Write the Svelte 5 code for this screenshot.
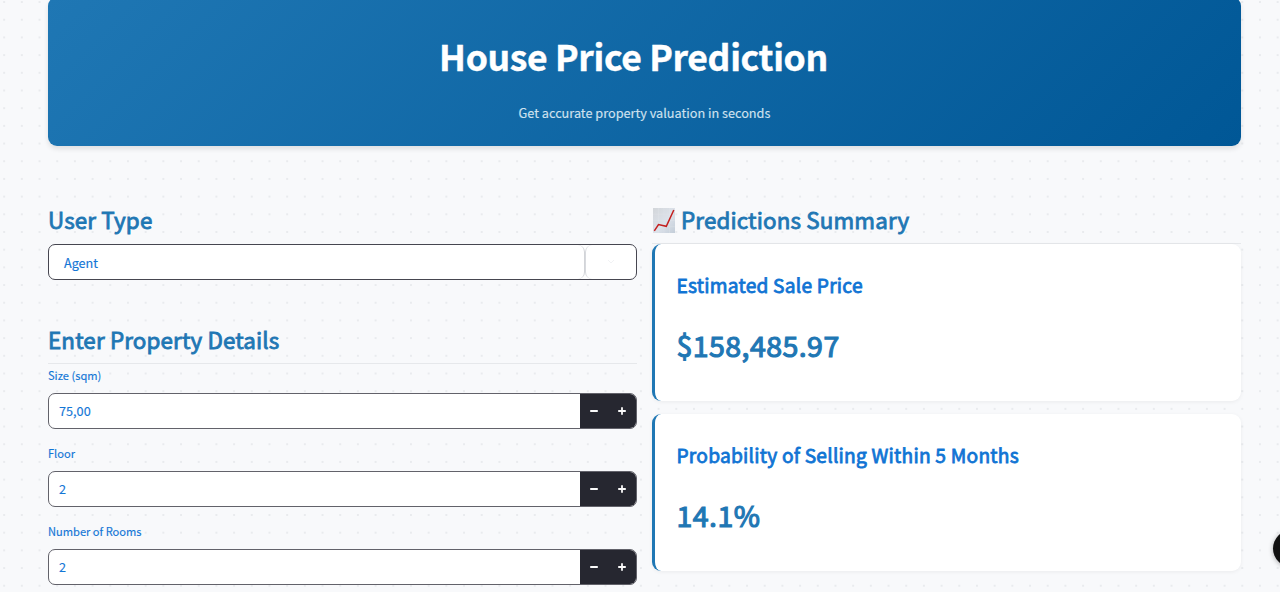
<script>
  const fields = [
    { label: 'Size (sqm)', value: '75,00' },
    { label: 'Floor', value: '2' },
    { label: 'Number of Rooms', value: '2' }
  ];
  const cards = [
    { title: 'Estimated Sale Price', value: '$158,485.97' },
    { title: 'Probability of Selling Within 5 Months', value: '14.1%' }
  ];
</script>

<main>
  <header>
    <h1>House Price Prediction</h1>
    <p>Get accurate property valuation in seconds</p>
  </header>

  <div class="columns">
    <section class="left">
      <h2>User Type</h2>
      <div class="select">
        <div class="chosen">Agent</div>
        <div class="arrow">
          <svg width="8" height="5" viewBox="0 0 8 5"><path d="M1 1l3 3 3-3" fill="none" stroke="#f1f2f4" /></svg>
        </div>
      </div>

      <h2 class="details">Enter Property Details</h2>
      {#each fields as f}
        <div class="field">
          <div class="label">{f.label}</div>
          <div class="number">
            <div class="input">{f.value}</div>
            <button aria-label="Decrease"><svg width="10" height="10" viewBox="0 0 10 10"><path d="M1.2 5h7.6" stroke="#fafafa" stroke-width="1.9" /></svg></button>
            <button aria-label="Increase"><svg width="10" height="10" viewBox="0 0 10 10"><path d="M1.2 5h7.6M5 1.2v7.6" stroke="#fafafa" stroke-width="1.8" /></svg></button>
          </div>
        </div>
      {/each}
    </section>

    <section class="right">
      <h2 class="summary">
        <svg width="22" height="25" viewBox="0 0 22 25">
          <defs>
            <linearGradient id="paper" x1="0" y1="0" x2="1" y2="1">
              <stop offset="0" stop-color="#d3d6da" /><stop offset=".55" stop-color="#dce2ea" /><stop offset="1" stop-color="#c3cdd8" />
            </linearGradient>
          </defs>
          <rect width="22" height="25" fill="url(#paper)" />
          <path d="M5.5 0v25M11 0v25M16.5 0v25M0 6.2h22M0 12.5h22M0 18.7h22" stroke="#e3e7ec" stroke-opacity=".5" stroke-width=".6" />
          <path d="M1.3 22.8L5.5 16.5l7.8 1.8L20.8 2" fill="none" stroke="#c4201f" stroke-width="1.5" />
        </svg>
        <span>Predictions Summary</span>
      </h2>
      {#each cards as c}
        <article>
          <h3>{c.title}</h3>
          <strong>{c.value}</strong>
        </article>
      {/each}
    </section>
  </div>
  <div class="bubble"></div>
</main>

<style>
  :global(body) { overflow: hidden; }
  main {
    box-sizing: border-box;
    position: relative;
    height: 592px;
    overflow: hidden;
    padding: 0 39px 0 48px;
    background: radial-gradient(circle at 50% 50%, #e9ebee 0.7px, transparent 1.2px) -4.7px -6.8px / 17.7px 17.7px #f8f9fb;
    font-family: "Noto Sans CJK SC", sans-serif;
    color: #1376d6;
  }
  header {
    box-sizing: border-box;
    height: 148.5px;
    margin-top: -3px;
    padding-top: 33px;
    border-radius: 9px;
    background: linear-gradient(135deg, #1f77b4, #005796);
    box-shadow: 0 3px 5px rgba(0, 0, 0, 0.1);
    text-align: center;
  }
  h1, h2, h3, p { margin: 0; }
  h1 { padding-right: 22px; font-size: 35.5px; line-height: 52px; font-weight: 700; letter-spacing: -0.34px; color: #fff; -webkit-text-stroke: 0.4px #fff; }
  p { margin-top: 20px; font-size: 12.7px; line-height: 22px; color: #cfe1ef; -webkit-text-stroke: 0.15px; }
  .columns { display: grid; grid-template-columns: 589px 589px; gap: 15px; padding-top: 58px; }
  h2 { font-size: 22.4px; line-height: 31px; height: 40px; font-weight: 400; letter-spacing: 0.14px; color: #1f77b4; -webkit-text-stroke: 0.85px #1f77b4; }
  .select {
    box-sizing: border-box; display: flex; height: 36px;
    border: 1px solid #464650; border-radius: 7px; background: #fff; overflow: hidden;
  }
  .chosen { flex: 1; padding-left: 15px; font-size: 12.6px; line-height: 35px; border-right: 1px solid #d2d4d8; border-radius: 0 7px 7px 0; }
  .arrow { box-sizing: border-box; width: 51px; display: flex; align-items: center; justify-content: center; border-left: 1px solid #d8dade; border-radius: 7px 0 0 7px; }
  .details { box-sizing: border-box; margin-top: 44px; border-bottom: 1px solid #e6e8eb; }
  .field { height: 78px; }
  .label { height: 29px; font-size: 11.1px; line-height: 23px; -webkit-text-stroke: 0.15px; }
  .number {
    box-sizing: border-box; display: flex; height: 36px;
    border: 1px solid #62626a; border-radius: 7px; background: #fff; overflow: hidden;
  }
  .input { flex: 1; padding-left: 10px; font-size: 12.7px; line-height: 34px; }
  .chosen, .input { -webkit-text-stroke: 0.15px; }
  button { width: 28px; padding: 0; border: 0; background: #262730; display: flex; align-items: center; justify-content: center; }
  .summary { box-sizing: border-box; display: flex; gap: 6px; padding-left: 1px; border-bottom: 1px solid #e6e8eb; }
  .summary svg { margin-top: 4px; }
  article {
    box-sizing: border-box; height: 157px; margin-bottom: 13.5px; padding: 24px 21.5px;
    border-left: 3.5px solid #1f77b4; border-radius: 9px; background: #fff;
    box-shadow: 0 1px 4px rgba(0, 0, 0, 0.06);
  }
  h3 { font-size: 19.2px; line-height: 34px; font-weight: 400; letter-spacing: 0.22px; color: #1074d4; -webkit-text-stroke: 0.8px #1074d4; }
  strong { display: block; margin-top: 21px; font-size: 28.5px; line-height: 44px; font-weight: 400; letter-spacing: 0.45px; color: #1f77b4; -webkit-text-stroke: 1.15px #1f77b4; }
  .bubble { position: absolute; left: 1273px; top: 530px; width: 37px; height: 37px; border-radius: 50%; background: #111; box-shadow: 0 1px 5px rgba(0, 0, 0, 0.3); }
</style>
